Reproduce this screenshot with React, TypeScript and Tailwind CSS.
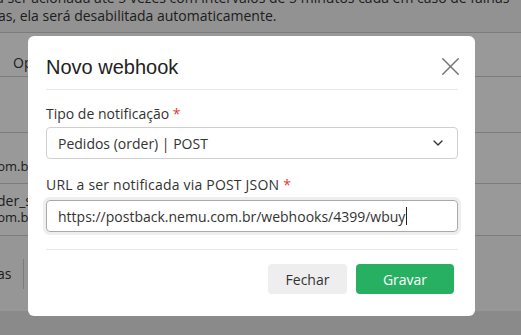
import { ChevronDown, X } from "lucide-react";

const body = "font-['Open_Sans','Noto_Sans',sans-serif]";

export default function App() {
  return (
    <div className={`relative h-[335px] w-[521px] overflow-hidden bg-white text-[#333] ${body}`}>
      {/* page behind the modal */}
      <div className="flex h-full flex-col">
        <div className="h-[32px] overflow-hidden bg-[#f4f4f4] text-[14px] leading-[20px]">
          <p className="-ml-[4px] -mt-[12px] whitespace-nowrap">a ser acionada até 5 vezes com intervalos de 5 minutos cada em caso de falhas</p>
          <p className="-ml-[15px] -mt-[2px] whitespace-nowrap">mas, ela será desabilitada automaticamente.</p>
        </div>
        <div className="h-[45px] border-y border-[#cfcfcf] bg-white pl-[13px] pt-[19px] text-[14px]">Opções</div>
        <div className="h-[56px] border-b border-[#cfcfcf] bg-white" />
        <div className="h-[51px] border-b border-[#cfcfcf] bg-white pt-[25px] text-[13px] leading-[16px]">
          <p className="-ml-[9px]">com.br/</p>
        </div>
        <div className="h-[52px] border-b border-[#cfcfcf] bg-white pt-[9px] text-[13px] leading-[16px]">
          <p className="-ml-[3px] text-[14px]">der_s</p>
          <p className="-ml-[9px]">com.br/</p>
        </div>
        <div className="flex h-[75px] items-center bg-[#fbfbfb]">
          <span className="-ml-[3px] text-[14px]">as</span>
          <div className="ml-[12px] h-[30px] w-px bg-[#cfcfcf]" />
        </div>
        <div className="flex-1 bg-[#e6e6e6]" />
      </div>

      {/* overlay + modal */}
      <div className="absolute inset-0 bg-black/40 pl-[28px] pt-[36px]">
        <div className="w-[447px] rounded-[6px] bg-white px-[18px] pb-[22px] pr-[17px]">
          <div className="flex h-[54px] items-center justify-between border-b border-[#e8e8e8] pt-[8px]">
            <h2 className="font-['Liberation_Sans',Arial,sans-serif] text-[20px] text-[#222]">Novo webhook</h2>
            <X className="-mr-[8px] h-[31px] w-[31px] text-[#777]" strokeWidth={1.15} />
          </div>

          <label className="mt-[14px] block text-[14px] leading-[20px] text-[#333]">
            Tipo de notificação <span className="text-[#e53935]">*</span>
          </label>
          <div className="mt-[3px] flex h-[32px] items-center justify-between rounded-[4px] border border-[#cfcfcf] px-[11px] text-[14px]">
            <span>Pedidos (order) | POST</span>
            <ChevronDown className="h-[16px] w-[16px] text-[#333]" strokeWidth={2} />
          </div>

          <label className="mt-[16px] block text-[14px] leading-[20px] tracking-[0.2px] text-[#333]">
            URL a ser notificada via POST JSON <span className="text-[#e53935]">*</span>
          </label>
          <div className="mt-[5px] flex h-[32px] items-center rounded-[4px] border border-[#a9a9a9] px-[11px] text-[14px] shadow-[0_0_0_3px_#eeeeee]">
            <span>https://postback.nemu.com.br/webhooks/4399/wbuy</span>
            <span className="ml-px h-[18px] w-px bg-[#222]" />
          </div>

          <div className="mt-[17px] border-t border-[#e8e8e8]" />

          <div className="mt-[14px] flex justify-end gap-[9px] pr-[4px]">
            <button className="h-[30px] w-[79px] rounded-[4px] bg-[#eeeeee] text-[14px] text-[#333]">Fechar</button>
            <button className="h-[30px] w-[98px] rounded-[4px] bg-[#28b062] text-[14px] text-white">Gravar</button>
          </div>
        </div>
      </div>
    </div>
  );
}
